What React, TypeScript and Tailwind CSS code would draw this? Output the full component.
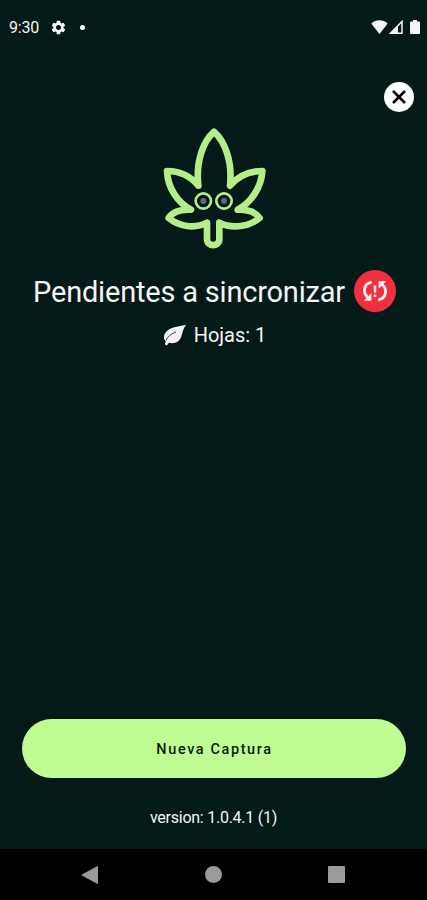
import { MdSettings } from "react-icons/md";

function StatusBar() {
  return (
    <header className="flex h-[54px] items-center pl-[9px] pr-[7px]">
      <span className="pt-[2px] text-[16px] tracking-[-0.2px]">9:30</span>
      <MdSettings className="ml-[11px] size-[17px]" />
      <span className="ml-[13px] size-[5px] rounded-full bg-white" />
      <div className="ml-auto flex items-center">
        <svg className="h-[14px] w-[17px]" viewBox="0 0 17 14" fill="currentColor">
          <path d="M.3 3.5C5 -.7 12 -.7 16.7 3.5L8.5 14Z" />
        </svg>
        <svg className="ml-[1px] h-[14px] w-[14px]" viewBox="0 0 14 14">
          <path d="M13 1.5V13.2H1.5Z" fill="none" stroke="currentColor" strokeWidth="1.5" />
          <path d="M1 13.5L9 5.5V13.5Z" fill="currentColor" />
        </svg>
        <svg className="ml-[7px] h-[14px] w-[10px]" viewBox="0 0 10 14" fill="currentColor">
          <path d="M3 0H7V1.5H9Q10 1.5 10 2.5V13Q10 14 9 14H1Q0 14 0 13V2.5Q0 1.5 1 1.5H3Z" />
        </svg>
      </div>
    </header>
  );
}

function Logo() {
  return (
    <svg className="h-[123px] w-[106px]" viewBox="36 36 318 369" fill="none">
      <path
        d="M192 50C160 78 137 138 145 212C122 184 88 168 51 168C53 217 82 263 123 284C92 282 67 292 56 309C86 334 133 343 171 323V373C171 396 208 396 208 373V323C248 343 299 334 329 309C318 292 292 282 263 284C303 263 334 217 337 168C299 168 264 184 240 212C248 138 224 78 192 50Z"
        stroke="#b4ee88"
        strokeWidth="20"
        strokeLinejoin="round"
      />
      <circle cx="160" cy="258" r="23" stroke="#b4ee88" strokeWidth="8" />
      <circle cx="222" cy="258" r="23" stroke="#b4ee88" strokeWidth="8" />
      <circle cx="160" cy="258" r="9" fill="#62687c" />
      <circle cx="222" cy="258" r="9" fill="#62687c" />
    </svg>
  );
}

function SyncProblemIcon() {
  return (
    <svg className="h-[22px] w-[26px]" viewBox="0 0 26 22" fill="none">
      <path d="M9.8 2.2C1.2 3.8 .5 13 6 17.5" stroke="currentColor" strokeWidth="2.8" />
      <path d="M1.8 20.8H9.4V13.2Z" fill="currentColor" />
      <path d="M16.2 19.8C24.8 18.2 25.5 9 20 4.5" stroke="currentColor" strokeWidth="2.8" />
      <path d="M24.2 1.2H16.6V8.8Z" fill="currentColor" />
      <path d="M13 5.5V12.5M13 14.5V17" stroke="currentColor" strokeWidth="2.5" />
    </svg>
  );
}

function LeafIcon() {
  return (
    <svg className="h-[22px] w-[24px]" viewBox="0 0 24 22">
      <path
        d="M23.3 .8C17 2.4 10 2.6 5.2 6C1 9 .2 12.8 1.8 16.2L2.8 17.2L1.8 20.2L3.8 21.4L6 18.8C12 20.4 16.5 17.5 18.3 12.5C19.8 8 20.3 4 23.3 .8Z"
        fill="currentColor"
      />
      <path d="M3 16.3C5 12.3 8.3 9.6 13 8" fill="none" stroke="#041a18" strokeWidth=".8" />
    </svg>
  );
}

function NavBar() {
  return (
    <nav className="flex h-[51px] items-center justify-between bg-black pl-[81px] pr-[82px] text-[#9b9b9b]">
      <svg className="size-[18px]" viewBox="0 0 18 18" fill="currentColor">
        <path d="M16.5 .5V17.5L1 9Z" stroke="currentColor" strokeLinejoin="round" />
      </svg>
      <span className="size-[17px] rounded-full bg-[#9b9b9b]" />
      <span className="size-[17px] rounded-[1px] bg-[#9b9b9b]" />
    </nav>
  );
}

export default function App() {
  return (
    <div className="flex h-[900px] w-[427px] flex-col overflow-hidden bg-[#041a18] font-[Roboto,sans-serif] text-[#f5f5f5]">
      <StatusBar />
      <main className="flex flex-1 flex-col items-center">
        <button
          aria-label="Cerrar"
          className="mt-[28px] mr-[13px] flex size-[30px] items-center justify-center self-end rounded-full bg-white text-black"
        >
          <svg className="size-[14px]" viewBox="0 0 14 14" stroke="currentColor" strokeWidth="2.5">
            <path d="M1 1L13 13M13 1L1 13" />
          </svg>
        </button>
        <div className="mt-[15px] pl-[2px]">
          <Logo />
        </div>
        <div className="mt-[20px] flex h-[42px] items-center gap-[9px] pl-[2px]">
          <h1 className="pt-[4px] text-[29px] tracking-[-0.2px] whitespace-nowrap">Pendientes a sincronizar</h1>
          <span className="flex size-[42px] items-center justify-center rounded-full bg-[#f0303f]">
            <SyncProblemIcon />
          </span>
        </div>
        <div className="mt-[8px] flex h-[30px] items-center gap-[7px] pl-[2px]">
          <LeafIcon />
          <span className="text-[20px]">Hojas: 1</span>
        </div>
        <button className="mt-auto h-[59px] w-[384px] rounded-full bg-[#bffd92] pt-[2px] pl-[2px] text-[14.5px] font-medium tracking-[1.6px] text-[#0c1a0c]">
          Nueva Captura
        </button>
        <p className="mt-[27px] mb-[18px] text-[16px] leading-[26px] tracking-[-0.25px]">version: 1.0.4.1 (1)</p>
      </main>
      <NavBar />
    </div>
  );
}
